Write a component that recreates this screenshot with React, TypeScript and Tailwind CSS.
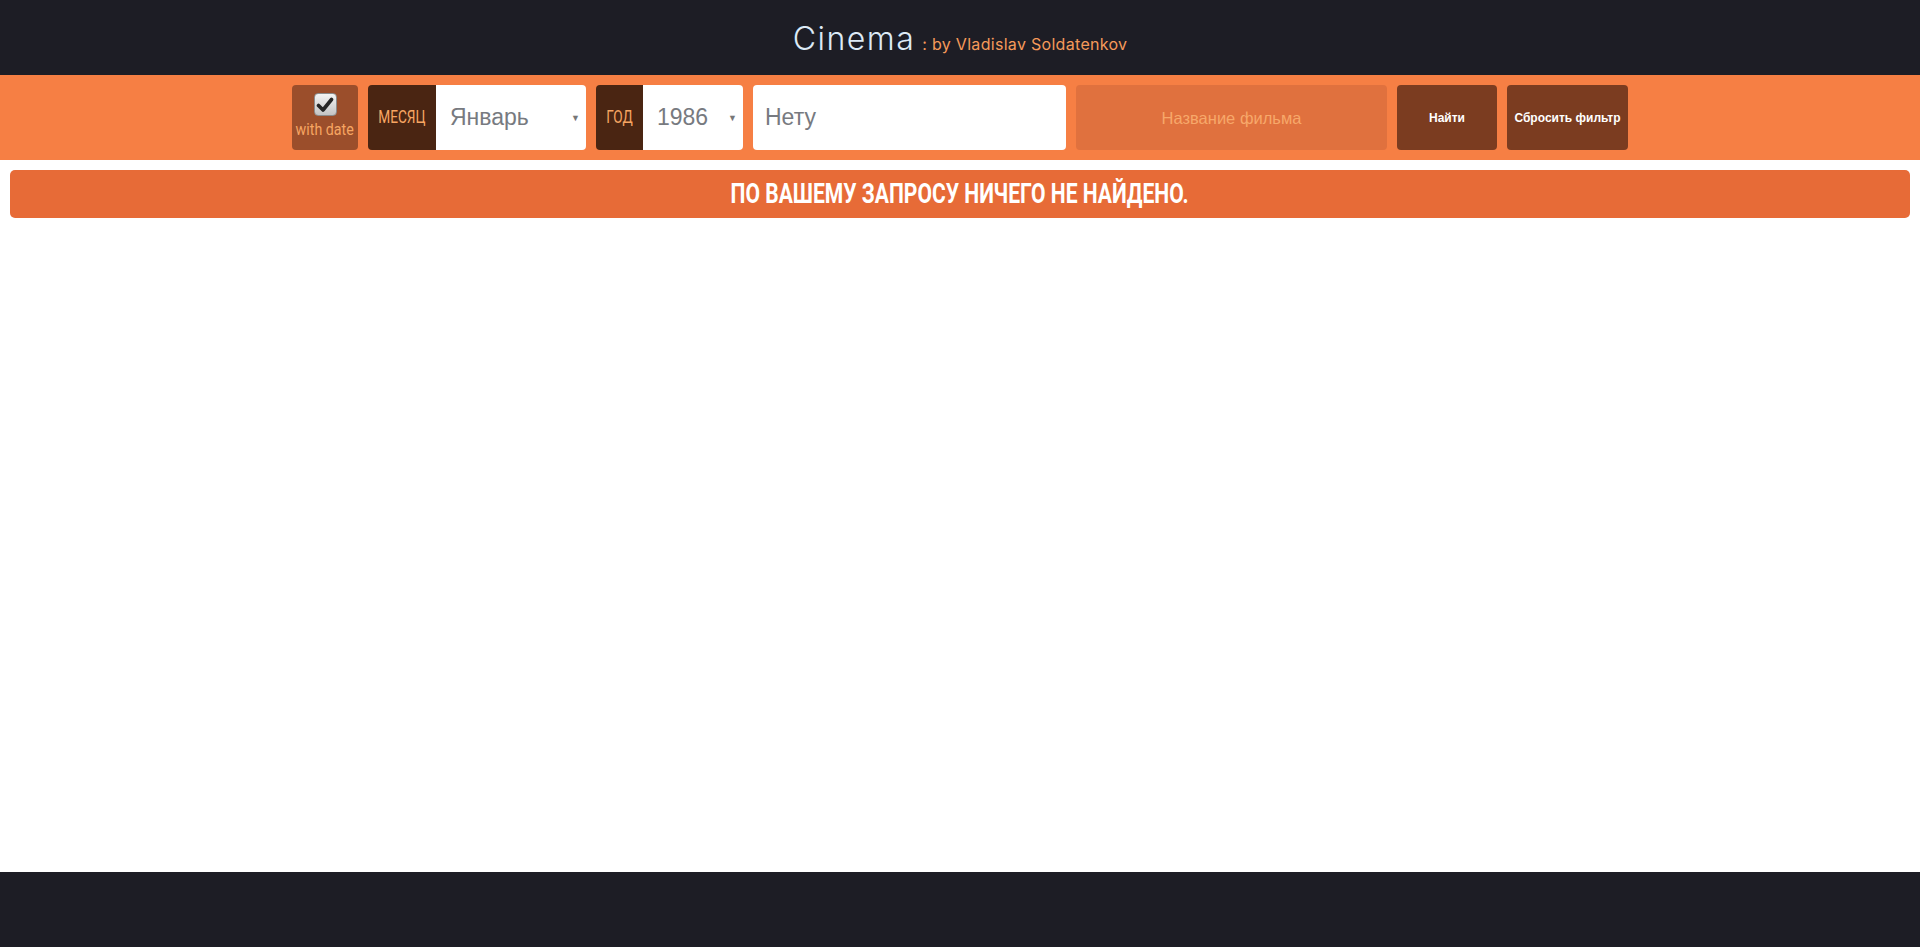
const cond = "font-['Roboto',sans-serif] inline-block origin-center";

const Header = () => (
    <header className="h-[75px] bg-[#1d1d25] flex items-center justify-center">
        <div className="flex items-baseline gap-[7px] pt-[2px]">
            <span className="font-['Inter',sans-serif] font-light text-[32px] text-[#dce9f6] tracking-[1.5px]">Cinema</span>
            <span className="font-['Inter',sans-serif] text-[16px] text-[#f59a5a] tracking-[0.3px]">: by Vladislav Soldatenkov</span>
        </div>
    </header>
);

const CheckboxBox = () => (
    <div className="w-[66px] h-[65px] rounded-[4px] bg-[#9b4e2b] flex flex-col items-center pt-[8px]">
        <div className="w-[23px] h-[23px] rounded-[4px] border border-[#8c8c8c] bg-gradient-to-b from-[#f4f4f4] to-[#c4c4c4] flex items-center justify-center">
            <svg width="18" height="16" viewBox="0 0 18 16">
                <path d="M2.5 8.5 L7 13 L15.5 2.5" fill="none" stroke="#262626" strokeWidth="3.6" strokeLinecap="round" strokeLinejoin="round" />
            </svg>
        </div>
        <span className={`${cond} scale-x-[0.89] text-[16px] text-[#f7a562] leading-none mt-[6px] whitespace-nowrap`}>with date</span>
    </div>
);

interface SelectGroupProps {
    label: string;
    value: string;
    labelWidth: string;
    width: string;
}

const SelectGroup = ({ label, value, labelWidth, width }: SelectGroupProps) => (
    <div className={`h-[65px] rounded-[4px] overflow-hidden flex ${width}`}>
        <div className={`${labelWidth} bg-[#4a2512] flex items-center justify-center`}>
            <span className={`${cond} scale-x-[0.72] text-[19px] text-[#f7a562]`}>{label}</span>
        </div>
        <div className="flex-1 bg-white flex items-center pl-[14px] pr-[6px]">
            <span className="flex-1 font-['Liberation_Sans',sans-serif] text-[23px] text-[#777a80]">{value}</span>
            <span className="text-[9px] text-[#777]">▼</span>
        </div>
    </div>
);

const FilterBar = () => (
    <div className="h-[85px] bg-[#f67f44] flex justify-center gap-[10px] pt-[10px]">
        <CheckboxBox />
        <SelectGroup label="МЕСЯЦ" value="Январь" labelWidth="w-[68px]" width="w-[218px]" />
        <SelectGroup label="ГОД" value="1986" labelWidth="w-[47px]" width="w-[147px]" />
        <div className="w-[313px] h-[65px] rounded-[4px] bg-white flex items-center px-[12px]">
            <span className="font-['Liberation_Sans',sans-serif] text-[23px] text-[#777a80]">Нету</span>
        </div>
        <div className="w-[311px] h-[65px] rounded-[4px] bg-[#e0713e] flex items-center justify-center pt-[2px]">
            <span className="font-['Liberation_Sans',sans-serif] text-[16.5px] text-[#f7a86a]">Название фильма</span>
        </div>
        <button className="w-[100px] h-[65px] rounded-[4px] bg-[#7b3c20] text-white font-['Liberation_Sans',sans-serif] text-[12px] font-bold">Найти</button>
        <button className="w-[121px] h-[65px] rounded-[4px] bg-[#7b3c20] text-white font-['Liberation_Sans',sans-serif] text-[12px] font-bold whitespace-nowrap">Сбросить фильтр</button>
    </div>
);

export default function App() {
    return (
        <div className="min-h-[947px] flex flex-col bg-white">
            <Header />
            <FilterBar />
            <main className="flex-1 px-[10px] pt-[10px]">
                <div className="h-[48px] rounded-[5px] bg-[#e76b37] flex items-center justify-center">
                    <span className={`${cond} scale-x-[0.78] text-[27px] font-bold text-white uppercase whitespace-nowrap`}>По вашему запросу ничего не найдено.</span>
                </div>
            </main>
            <footer className="h-[75px] bg-[#1d1d25]" />
        </div>
    );
}
